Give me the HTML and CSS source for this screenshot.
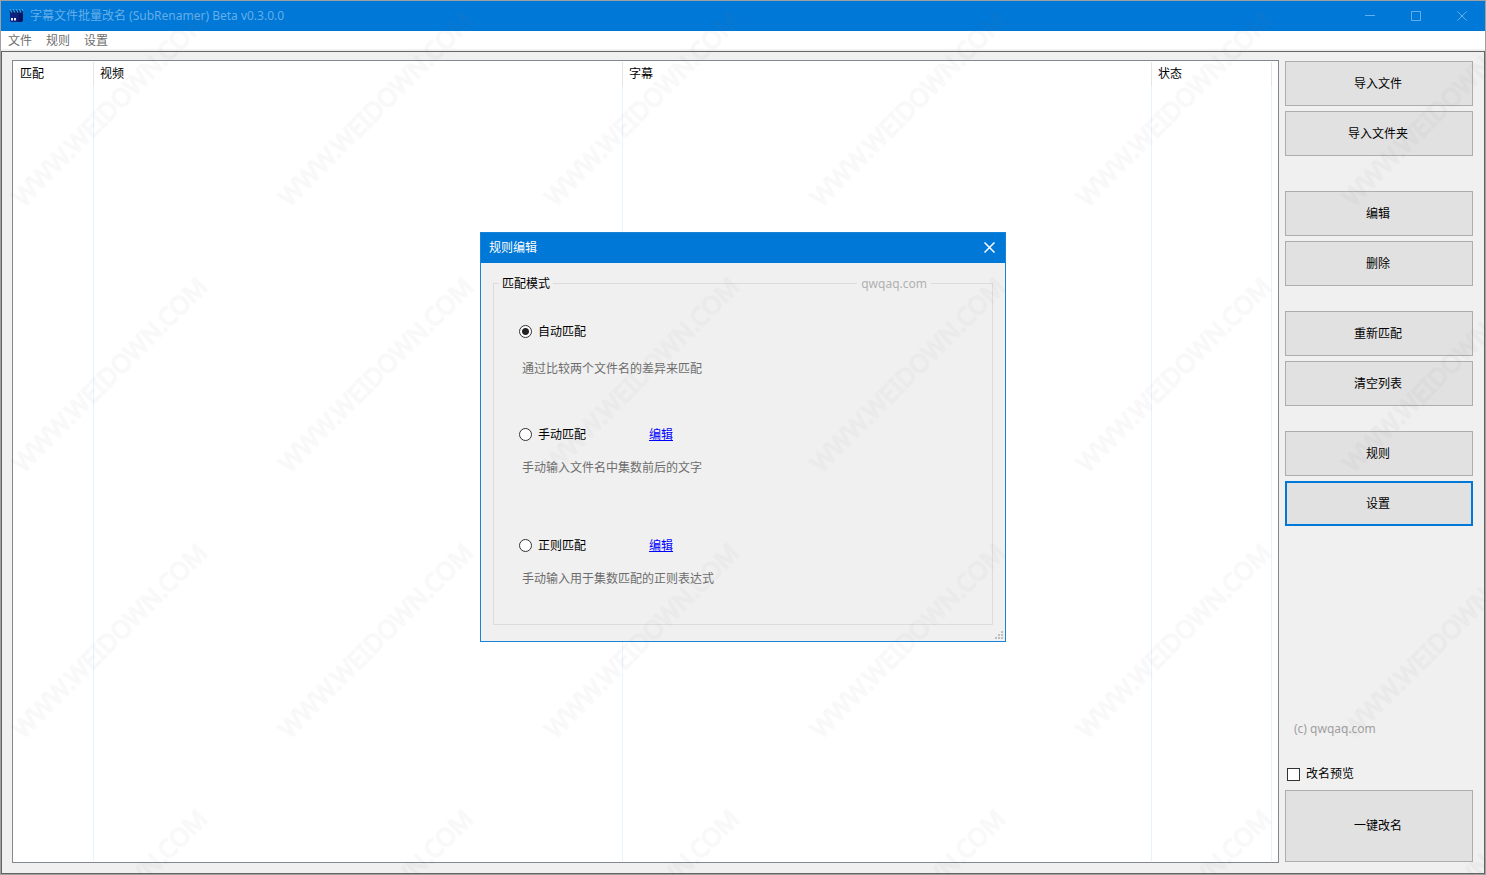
FILE: index.html
```html
<!DOCTYPE html>
<html lang="zh-CN">
<head>
<meta charset="utf-8">
<meta name="viewport" content="width=device-width, initial-scale=1">
<title>字幕文件批量改名 (SubRenamer)</title>
<link rel="stylesheet" href="styles.css">
</head>
<body>
<div class="window">
  <header class="titlebar">
    <svg class="app-icon" width="15" height="14" viewBox="0 0 15 14" aria-hidden="true">
      <path d="M1 3h13v8.500L12.500 13H2L1 12z" fill="#10207c"/>
      <path d="M10 3h4v8.500L12.500 13H9z" fill="#0a1560"/>
      <path d="M.500 1h13.500v3.500H1z" fill="#06256e"/>
      <path d="M1 0l2 3.500M4 0l2 3.500M7 0l2 3.500M10 0l2 3.500M13 0l1 2" stroke="#2fa4f0" stroke-width="1.300"/>
      <path d="M2 9h2v2.500H2zM5 9h2v2.500H5z" fill="#e8ecff"/>
    </svg>
    <h1 class="window-title">字幕文件批量改名 (SubRenamer) Beta v0.3.0.0</h1>
    <div class="caption-buttons">
      <button class="caption-button" type="button" aria-label="最小化"><svg width="11" height="11" viewBox="0 0 11 11"><path d="M0 4.500h10"/></svg></button>
      <button class="caption-button" type="button" aria-label="最大化"><svg width="11" height="11" viewBox="0 0 11 11"><path d="M.500 .500h9v9h-9z"/></svg></button>
      <button class="caption-button" type="button" aria-label="关闭"><svg width="11" height="11" viewBox="0 0 11 11"><path d="M.500 .500l9 9M9.500 .500l-9 9"/></svg></button>
    </div>
  </header>
  <nav class="menubar">
    <button class="menu-item" type="button">文件</button>
    <button class="menu-item" type="button">规则</button>
    <button class="menu-item" type="button">设置</button>
  </nav>
  <main class="content">
    <div class="list">
      <table class="list-table">
        <colgroup><col class="col-match"><col><col><col class="col-status"><col class="col-rest"></colgroup>
        <thead><tr><th>匹配</th><th>视频</th><th>字幕</th><th>状态</th><td></td></tr></thead>
        <tbody><tr><td></td><td></td><td></td><td></td><td></td></tr></tbody>
      </table>
    </div>
    <aside class="sidebar">
      <div class="group group-import">
        <button class="button" type="button">导入文件</button>
        <button class="button" type="button">导入文件夹</button>
      </div>
      <div class="group">
        <button class="button" type="button">编辑</button>
        <button class="button" type="button">删除</button>
      </div>
      <div class="group">
        <button class="button" type="button">重新匹配</button>
        <button class="button" type="button">清空列表</button>
      </div>
      <div class="group">
        <button class="button" type="button">规则</button>
        <button class="button button-default" type="button">设置</button>
      </div>
      <p class="copyright">(c) qwqaq.com</p>
      <label class="preview"><input class="checkbox" type="checkbox">改名预览</label>
      <button class="button button-large" type="button">一键改名</button>
    </aside>
  </main>
</div>

<dialog class="dialog" open aria-labelledby="dialog-title">
  <header class="dialog-titlebar">
    <h2 class="dialog-title" id="dialog-title">规则编辑</h2>
    <button class="dialog-close" type="button" aria-label="关闭"><svg width="11" height="11" viewBox="0 0 11 11"><path d="M.500 .500l10 10M10.500 .500l-10 10"/></svg></button>
  </header>
  <form class="dialog-body">
    <fieldset class="modes">
      <legend class="modes-legend">匹配模式</legend>
      <span class="site">qwqaq.com</span>
      <div class="mode-list">
        <div class="mode mode-auto">
          <label class="mode-label"><input class="radio" type="radio" name="mode" checked>自动匹配</label>
          <p class="mode-note">通过比较两个文件名的差异来匹配</p>
        </div>
        <div class="mode mode-manual">
          <label class="mode-label"><input class="radio" type="radio" name="mode">手动匹配</label>
          <a class="mode-link" href="#manual">编辑</a>
          <p class="mode-note">手动输入文件名中集数前后的文字</p>
        </div>
        <div class="mode">
          <label class="mode-label"><input class="radio" type="radio" name="mode">正则匹配</label>
          <a class="mode-link" href="#regex">编辑</a>
          <p class="mode-note">手动输入用于集数匹配的正则表达式</p>
        </div>
      </div>
    </fieldset>
  </form>
  <svg class="grip" width="8" height="8" viewBox="0 0 8 8" aria-hidden="true"><path d="M6 0h2v2H6zM3 3h2v2H3zM6 3h2v2H6zM0 6h2v2H0zM3 6h2v2H3zM6 6h2v2H6z" fill="#bfbfbf"/></svg>
</dialog>

<svg class="watermark" aria-hidden="true">
  <defs>
    <pattern id="mark" x="-24" y="-25" width="266" height="266" patternUnits="userSpaceOnUse">
      <text class="mark-text" x="133" y="143" text-anchor="middle" transform="rotate(-45 133 133)">WWW.WEIDOWN.COM</text>
    </pattern>
  </defs>
  <rect width="100%" height="100%" fill="url(#mark)"/>
</svg>
</body>
</html>
```
FILE: styles.css
```css
* { box-sizing: border-box; }

body {
  margin: 0;
  color: #000;
  font: 12px/16px "Noto Sans", "Noto Sans CJK SC", sans-serif;
}

h1, h2, p { margin: 0; font-size: 12px; font-weight: 400; }
button, input { font: inherit; color: inherit; }
button { padding: 0; }

.window {
  display: flex;
  flex-direction: column;
  height: 100vh;
  border: 1px solid #a0a0a0;
  background: #f0f0f0;
}

.titlebar {
  display: flex;
  align-items: center;
  height: 30px;
  padding-left: 8px;
  background: #0078d7;
  color: #66aee7;
}
.app-icon { margin-right: 6px; }
.window-title { flex: 1; }
.caption-buttons { display: flex; align-self: stretch; }
.caption-button {
  display: grid;
  place-items: center;
  width: 46px;
  border: 0;
  background: none;
}
.caption-button svg, .dialog-close svg { fill: none; stroke: currentColor; }
.dialog-close svg { stroke-width: 1.5; }

.menubar {
  display: flex;
  gap: 14px;
  height: 20px;
  padding: 2px 7px 0;
  border-bottom: 2px solid #f0f0f0;
  background: #fff;
  color: #6d6d6d;
}
.menu-item { border: 0; background: none; }

.content {
  display: flex;
  flex: 1;
  gap: 6px;
  min-height: 0;
  padding: 8px 11px 10px 10px;
  border: 1px solid #646464;
}

.list {
  flex: 1;
  min-width: 0;
  padding: 1px 0;
  border: 1px solid #828790;
  background: #fff;
}
.list-table {
  width: 100%;
  height: 100%;
  table-layout: fixed;
  border-collapse: separate;
  border-spacing: 0;
}
.col-match { width: 81px; }
.col-status { width: 120px; }
.col-rest { width: 6px; }
.list-table th {
  height: 24px;
  padding: 0 6px;
  border-right: 1px solid #e5e5e5;
  font-weight: 400;
  text-align: left;
}
.list-table th:first-child { padding-left: 7px; }
.list-table td { padding: 0; }
.list-table tbody td { border-right: 1px solid #e9f3fb; }
.list-table tbody td:last-child { border: 0; }

.sidebar {
  display: flex;
  flex-direction: column;
  width: 188px;
  padding: 1px 0;
}
.group {
  display: flex;
  flex-direction: column;
  gap: 5px;
  margin-bottom: 25px;
}
.group-import { margin-bottom: 35px; }
.button {
  height: 45px;
  padding-right: 2px;
  border: 1px solid #adadad;
  background: #e1e1e1;
}
.button-default { border: 2px solid #0078d7; }
.button-large { height: 72px; }
.copyright { margin: auto 0 29px 9px; color: #a0a0a0; }
.preview {
  display: flex;
  align-items: center;
  gap: 6px;
  margin: 0 0 8px 2px;
}
.checkbox, .radio {
  appearance: none;
  flex: none;
  width: 13px;
  height: 13px;
  margin: 0;
  border: 1px solid #333;
  background: #fff;
}
.checkbox:checked { background: #333; }
.radio { border-radius: 50%; }
.radio:checked { background: radial-gradient(circle, #222 3px, #fff 4px); }

.dialog {
  position: fixed;
  inset: 0 0 2px;
  width: 526px;
  height: fit-content;
  margin: auto;
  padding: 0;
  border: 1px solid #1883d7;
  background: #f0f0f0;
  color: #000;
}
.dialog-titlebar {
  display: flex;
  align-items: center;
  justify-content: space-between;
  height: 30px;
  padding-left: 8px;
  background: #0078d7;
  color: #fff;
}
.dialog-close {
  display: grid;
  place-items: center;
  align-self: stretch;
  width: 31px;
  border: 0;
  background: none;
}
.dialog-body { padding: 13px 12px 16px; }
.modes {
  position: relative;
  margin: 0;
  padding: 0;
  border: 1px solid #dcdcdc;
}
.modes-legend { margin-left: 5px; padding: 0 3px; }
.site {
  position: absolute;
  top: -16px;
  right: 61px;
  padding: 0 4px;
  background: #f0f0f0;
  color: #b0b0b0;
}
.mode-list { padding: 32px 25px 37px; }
.mode {
  display: grid;
  grid-template-columns: 130px 1fr;
  row-gap: 17px;
}
.mode-auto { row-gap: 21px; margin-bottom: 50px; }
.mode-manual { margin-bottom: 62px; }
.mode-label { display: flex; align-items: center; gap: 6px; }
.mode-link { justify-self: start; color: #00f; }
.mode-note { grid-column: 1 / -1; padding-left: 3px; color: #6d6d6d; }
.grip { position: absolute; right: 2px; bottom: 2px; }

.watermark {
  position: fixed;
  inset: 0;
  width: 100%;
  height: 100%;
  pointer-events: none;
}
.mark-text {
  fill: #808080;
  fill-opacity: 0.01;
  stroke: #808080;
  stroke-opacity: 0.04;
  stroke-width: 2px;
  font: 25px "Noto Sans", sans-serif;
}
```
